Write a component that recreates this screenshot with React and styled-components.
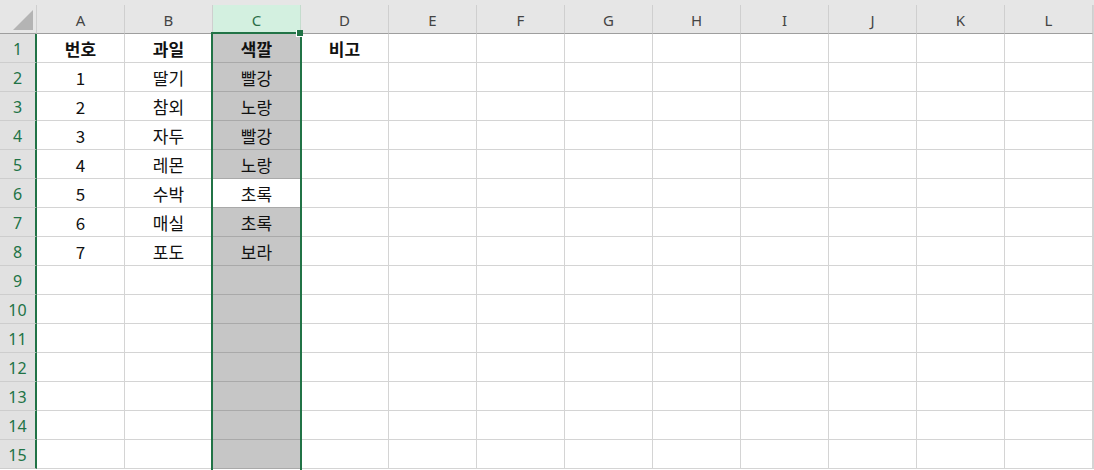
import React from "react";
import styled, { createGlobalStyle } from "styled-components";

const Global = createGlobalStyle`
  html, body { margin: 0; padding: 0; background: #fff; }
  body { font-family: "Noto Sans CJK KR", "Malgun Gothic", sans-serif; }
`;

const cols = ["A", "B", "C", "D", "E", "F", "G", "H", "I", "J", "K", "L"];

const data = [
  ["번호", "과일", "색깔", "비고"],
  ["1", "딸기", "빨강"],
  ["2", "참외", "노랑"],
  ["3", "자두", "빨강"],
  ["4", "레몬", "노랑"],
  ["5", "수박", "초록"],
  ["6", "매실", "초록"],
  ["7", "포도", "보라"],
];

const Sheet = styled.div`
  position: relative;
  width: 1094px;
  height: 470px;
  overflow: hidden;
  background: #fff;
`;

const TopStrip = styled.div`
  height: 5px;
  background: #e6e6e6;
`;

const Grid = styled.div`
  display: grid;
  grid-template-columns: 37px repeat(12, 88px) 1fr;
  grid-template-rows: 29px repeat(15, 29px);
`;

const Corner = styled.div`
  background: #e6e6e6;
  border-right: 1px solid #cfcfcf;
  border-bottom: 1px solid #9e9e9e;
  box-sizing: border-box;
  position: relative;
  &::after {
    content: "";
    position: absolute;
    right: 3px;
    bottom: 3px;
    width: 0;
    height: 0;
    border-left: 20px solid transparent;
    border-bottom: 20px solid #b4b4b4;
  }
`;

const ColHead = styled.div`
  box-sizing: border-box;
  background: ${(p) => (p.$sel ? "#d3f0e0" : "#e6e6e6")};
  color: ${(p) => (p.$sel ? "#2b6e47" : "#444")};
  border-right: 1px solid ${(p) => (p.$sel ? "#c4dccd" : "#cfcfcf")};
  border-bottom: ${(p) => (p.$sel ? "2px solid #217346" : "1px solid #9e9e9e")};
  display: flex;
  align-items: center;
  justify-content: center;
  font-family: "Noto Sans", "Liberation Sans", sans-serif;
  font-size: 15px;
  padding-top: 2px;
`;

const RowHead = styled.div`
  box-sizing: border-box;
  background: #e1e1e1;
  color: #217346;
  border-bottom: 1px solid #cdcdcd;
  border-right: 2px solid #217346;
  display: flex;
  align-items: center;
  justify-content: center;
  font-family: "Noto Sans", "Liberation Sans", sans-serif;
  font-size: 16px;
  padding-top: 1px;
`;

const Cell = styled.div`
  box-sizing: border-box;
  background: ${(p) => (p.$sel ? (p.$active ? "#fff" : "#c6c6c6") : "#fff")};
  border-right: 1px solid #d4d4d4;
  border-bottom: 1px solid ${(p) => (p.$sel ? "#a9a9a9" : "#d4d4d4")};
  display: flex;
  align-items: center;
  justify-content: center;
  font-size: 17px;
  font-weight: ${(p) => (p.$bold ? 700 : 400)};
  color: #111;
  white-space: nowrap;
  padding-top: 1px;
`;

const EdgeCell = styled.div`
  background: #fff;
  border-left: 1px solid #d4d4d4;
`;

const Selection = styled.div`
  position: absolute;
  left: 211px;
  top: 32px;
  width: 91px;
  height: 460px;
  box-sizing: border-box;
  border: 2px solid #217346;
  pointer-events: none;
`;

const Handle = styled.div`
  position: absolute;
  left: 296px;
  top: 30px;
  width: 6px;
  height: 6px;
  background: #217346;
  border-left: 1px solid #fff;
  border-bottom: 1px solid #fff;
`;

export default function App() {
  const rows = [];
  for (let r = 1; r <= 15; r++) {
    const vals = data[r - 1] || [];
    rows.push(<RowHead key={`h${r}`}>{r}</RowHead>);
    cols.forEach((c, i) => {
      const sel = c === "C";
      rows.push(
        <Cell
          key={`${c}${r}`}
          $sel={sel}
          $active={sel && r === 6}
          $bold={r === 1}
        >
          {vals[i] || ""}
        </Cell>
      );
    });
    rows.push(<EdgeCell key={`e${r}`} />);
  }

  return (
    <Sheet>
      <Global />
      <TopStrip />
      <Grid>
        <Corner />
        {cols.map((c) => (
          <ColHead key={c} $sel={c === "C"}>
            {c}
          </ColHead>
        ))}
        <EdgeCell />
        {rows}
      </Grid>
      <Selection />
      <Handle />
    </Sheet>
  );
}
